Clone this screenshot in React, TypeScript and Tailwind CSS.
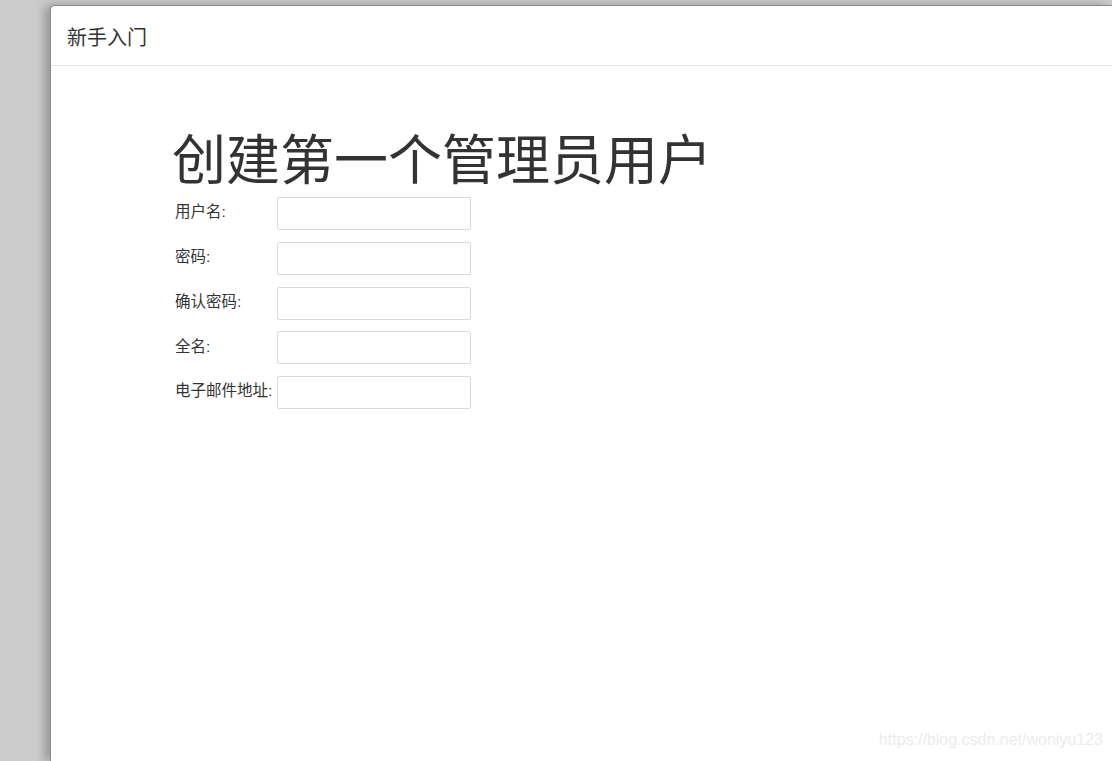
import React from 'react';

const fields = ['用户名:', '密码:', '确认密码:', '全名:', '电子邮件地址:'];

export default function App() {
  return (
    <div
      className="relative h-[761px] w-[1112px] overflow-hidden bg-[#cccccc] pl-[50px] pt-[5px]"
      style={{ fontFamily: '"Liberation Sans", "Noto Sans CJK SC", sans-serif' }}
    >
      <div className="h-full rounded-tl-[5px] border-l border-t border-[#8a8a8a] bg-white shadow-[-6px_0_10px_rgba(0,0,0,0.25)]">
        {/* header */}
        <div className="flex h-[60px] items-center border-b border-[#e5e5e5] pl-[16px] pt-[5px]">
          <span className="text-[20px] text-[#333]">新手入门</span>
        </div>

        <div className="pl-[121px] pt-[63px]">
          <h1 className="text-[54px] leading-[64px] text-[#333]">创建第一个管理员用户</h1>
          <div className="mt-[4px] grid grid-cols-[102px_194px] gap-y-[11.75px] pl-[3px]">
            {fields.map((f) => (
              <React.Fragment key={f}>
                <label className="flex h-[33px] items-center pb-[3px] text-[15.5px] text-[#333]">{f}</label>
                <input
                  type="text"
                  className="h-[33px] rounded-[2px] border border-[#dadada] bg-white px-2 text-[14px] outline-none"
                />
              </React.Fragment>
            ))}
          </div>
        </div>
      </div>

      <div className="absolute bottom-[9px] right-[9px] text-[16px] text-[#ececec]">
        https://blog.csdn.net/woniyu123
      </div>
    </div>
  );
}
